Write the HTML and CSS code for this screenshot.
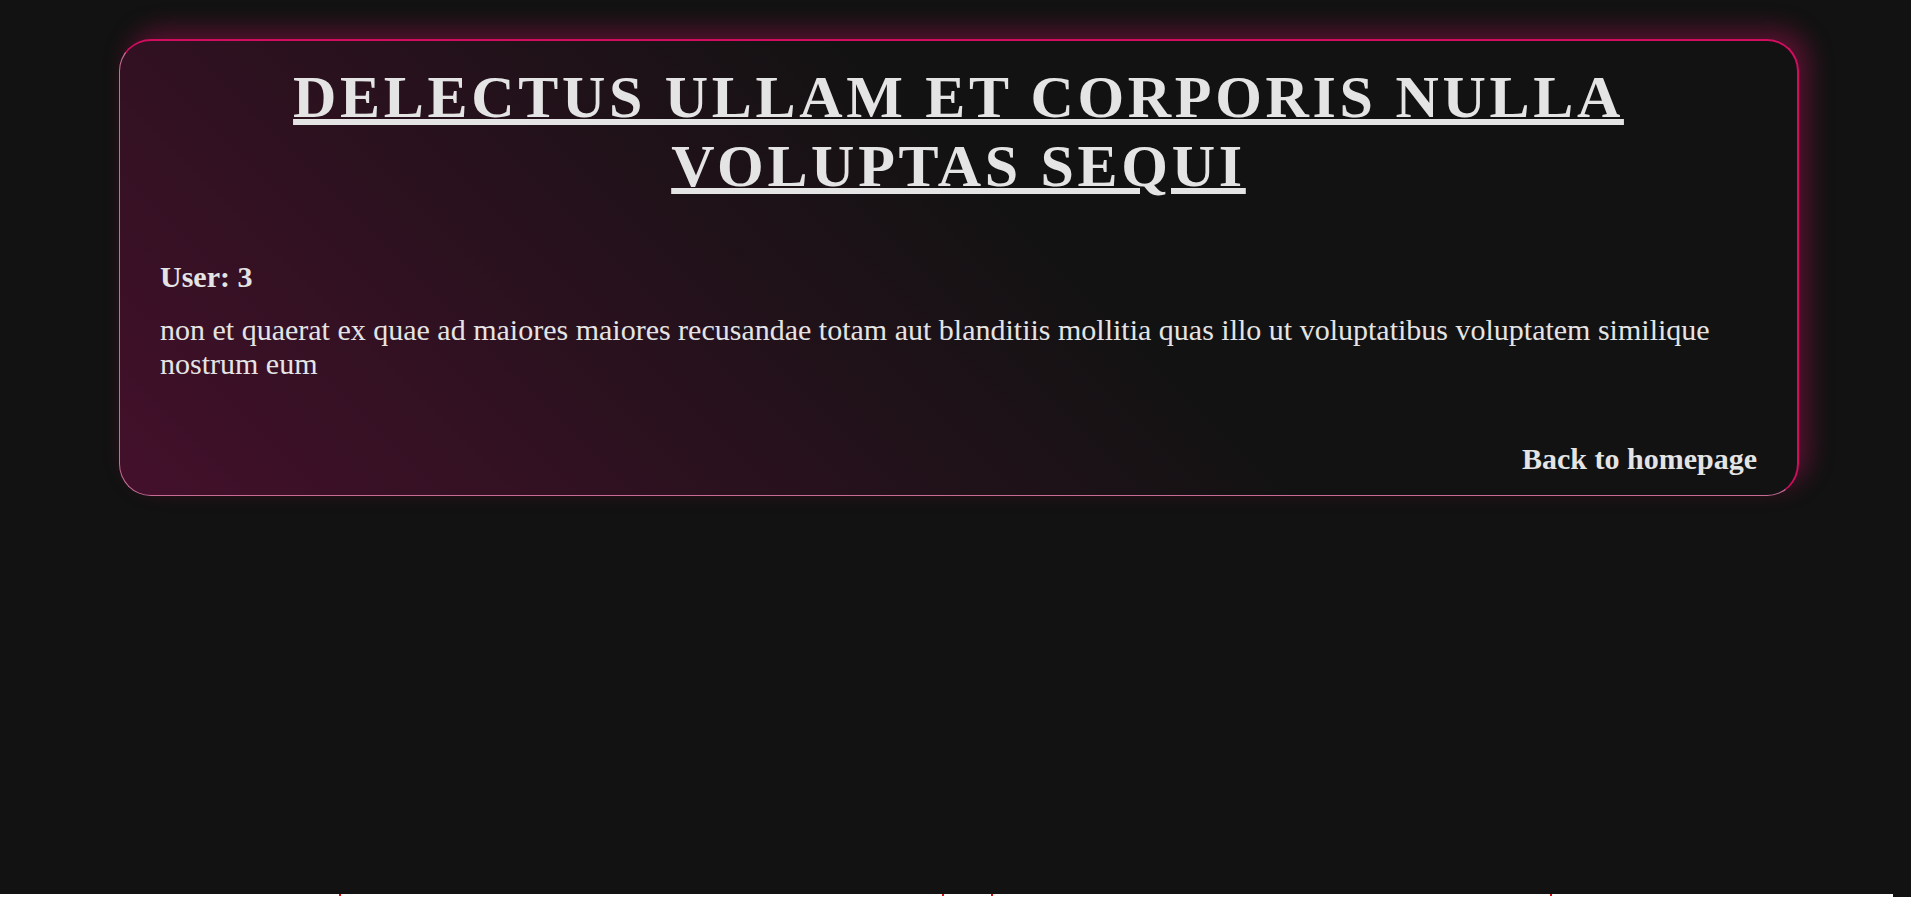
FILE: index.html
```html
<!DOCTYPE html>
<html lang="en">
<head>
<meta charset="utf-8">
<title>Post 3</title>
<link rel="stylesheet" href="styles.css">
</head>
<body>
<main class="page">
  <article class="post-card">
    <h1 class="post-title">Delectus ullam et corporis nulla voluptas sequi</h1>
    <p class="post-user">User: 3</p>
    <p class="post-body">non et quaerat ex quae ad maiores maiores recusandae totam aut blanditiis mollitia quas illo ut voluptatibus voluptatem similique nostrum eum</p>
    <div class="post-actions">
      <a class="back-link" href="#">Back to homepage</a>
    </div>
  </article>
</main>
<footer class="edge">
  <span class="mark mark-1"></span>
  <span class="mark mark-2"></span>
  <span class="mark mark-3"></span>
  <span class="mark mark-4"></span>
</footer>
</body>
</html>
```
FILE: styles.css
```css
html, body {
  margin: 0;
  padding: 0;
}

body {
  background: #121212;
  color: #e5e4e5;
  font-family: "Liberation Serif", "Times New Roman", serif;
  height: 100vh;
  display: flex;
  flex-direction: column;
  overflow: hidden;
}

.page {
  flex: 1;
  padding-top: 39px;
}

.post-card {
  box-sizing: border-box;
  width: 1680px;
  height: 457px;
  margin-left: 119px;
  padding: 22px 40px 18px 40px;
  border-top: 2px solid #d20d60;
  border-right: 2px solid #d20d60;
  border-left: 1px solid #c86c96;
  border-bottom: 1px solid #c86c96;
  border-radius: 32px;
  background: linear-gradient(45deg, #44102b 0%, #121212 56%);
  box-shadow: 10px -10px 24px rgba(210, 16, 96, 0.35);
}

.post-title {
  margin: 0;
  text-align: center;
  text-transform: uppercase;
  font-size: 60px;
  line-height: 69px;
  font-weight: bold;
  letter-spacing: 3.7px;
  text-decoration: underline;
  text-decoration-thickness: 6px;
  text-underline-offset: 2px;
}

.post-user {
  margin: 59px 0 0;
  font-size: 30px;
  line-height: 34px;
  font-weight: bold;
}

.post-body {
  margin: 19px 0 0;
  font-size: 30px;
  line-height: 34px;
}

.post-actions {
  margin-top: 61px;
  text-align: right;
}

.back-link {
  color: #e5e4e5;
  text-decoration: none;
  font-weight: bold;
  font-size: 30px;
  line-height: 34px;
}

.edge {
  height: 3px;
  margin-right: 18px;
  background: #ffffff;
  display: flex;
}

.mark {
  width: 2px;
  height: 2px;
  background: #e01010;
}

.mark-1 { margin-left: 339px; }
.mark-2 { margin-left: 601px; }
.mark-3 { margin-left: 47px; }
.mark-4 { margin-left: 557px; }
```
